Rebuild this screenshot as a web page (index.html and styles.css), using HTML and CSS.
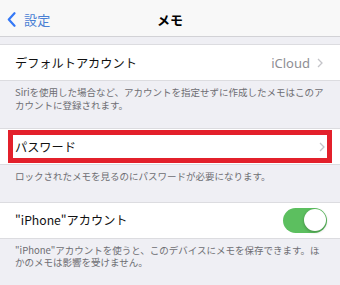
FILE: index.html
```html
<!DOCTYPE html>
<html lang="ja">
<head>
<meta charset="utf-8">
<link rel="stylesheet" href="styles.css">
</head>
<body>
<div class="nav">
  <div class="back">
    <svg class="back-icon" width="9" height="15" viewBox="0 0 9 15"><path d="M7.5 1.2 L1.8 7.5 L7.5 13.8" fill="none" stroke="#3478f6" stroke-width="2.2" stroke-linecap="round" stroke-linejoin="round"/></svg>
    <span class="back-label">設定</span>
  </div>
  <div class="title">メモ</div>
</div>
<div class="spacer"></div>

<div class="row">
  <span class="label">デフォルトアカウント</span>
  <span class="value">iCloud</span>
  <svg class="chev" width="6" height="10" viewBox="0 0 6 10"><path d="M1 1 L5 5 L1 9" fill="none" stroke="#c4c4c9" stroke-width="1.3"/></svg>
</div>
<div class="footer">
  <span class="line">Siriを使用した場合など、アカウントを指定せずに作成したメモはこのア</span>
  <span class="line">カウントに登録されます。</span>
</div>

<div class="row highlighted">
  <span class="label">パスワード</span>
  <svg class="chev" width="6" height="10" viewBox="0 0 6 10"><path d="M1 1 L5 5 L1 9" fill="none" stroke="#c4c4c9" stroke-width="1.3"/></svg>
  <div class="mark"></div>
</div>
<div class="footer single">
  <span class="line">ロックされたメモを見るのにパスワードが必要になります。</span>
</div>

<div class="row">
  <span class="label">"iPhone"アカウント</span>
  <div class="toggle"><div class="knob"></div></div>
</div>
<div class="footer">
  <span class="line">"iPhone"アカウントを使うと、このデバイスにメモを保存できます。ほ</span>
  <span class="line">かのメモは影響を受けません。</span>
</div>
</body>
</html>
```

FILE: styles.css
```css
html, body {
  margin: 0;
  padding: 0;
}
body {
  width: 340px;
  height: 285px;
  overflow: hidden;
  background: #efeff4;
  font-family: "Noto Sans CJK JP", "Noto Sans", sans-serif;
  color: #000;
}
.nav {
  height: 36px;
  background: #f8f8f8;
  border-bottom: 1px solid #d2d2d6;
  display: flex;
  align-items: center;
  position: relative;
}
.back {
  display: flex;
  align-items: center;
  padding-left: 7px;
  gap: 8px;
  padding-top: 2px;
}
.back-icon {
  display: block;
}
.back-label {
  font-size: 13px;
  color: #4a80d4;
  letter-spacing: 0.3px;
}
.title {
  position: absolute;
  left: 0;
  right: 0;
  top: 2px;
  bottom: 0;
  display: flex;
  align-items: center;
  justify-content: center;
  font-size: 13px;
  font-weight: 700;
}
.spacer {
  height: 7px;
}
.row {
  height: 35px;
  background: #fff;
  border-top: 1px solid #dcdce0;
  border-bottom: 1px solid #dcdce0;
  display: flex;
  align-items: center;
  padding: 0 17px 0 15px;
  position: relative;
}
.label {
  font-size: 12.2px;
  flex: 1;
  white-space: nowrap;
  color: #111;
}
.value {
  font-size: 13px;
  color: #8e8e93;
  margin-right: 7px;
  font-family: "Noto Sans", sans-serif;
}
.chev {
  display: block;
}
.footer {
  padding: 5px 15px 17px;
  font-size: 9.5px;
  line-height: 12.5px;
  color: #6d6d72;
}
.footer.single {
  padding-bottom: 19px;
}
.line {
  display: block;
  white-space: nowrap;
}
.mark {
  position: absolute;
  left: 8px;
  right: 8px;
  top: 1px;
  bottom: 1px;
  border: 5px solid #e3202b;
  pointer-events: none;
}
.highlighted {
  padding-right: 15px;
}
.toggle {
  width: 44px;
  height: 25px;
  border-radius: 13px;
  background: #5cbf5f;
  position: relative;
  margin-right: -4px;
}
.knob {
  position: absolute;
  right: 1.5px;
  top: 1.5px;
  width: 22px;
  height: 22px;
  border-radius: 50%;
  background: #fff;
  box-shadow: 0 1px 3px rgba(0,0,0,0.3);
}
```
